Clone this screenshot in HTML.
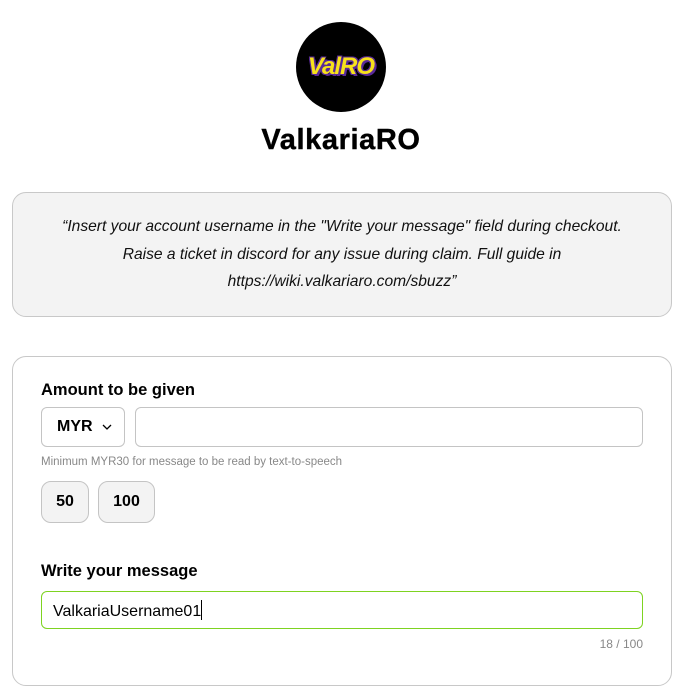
<!DOCTYPE html>
<html><head><meta charset="utf-8"><style>
*{box-sizing:border-box;margin:0;padding:0}
body{width:680px;height:660px;overflow:hidden;background:#fff;font-family:"Liberation Sans",sans-serif;color:#000;position:relative}
.abs{position:absolute}
.logo{left:296px;top:22px;width:90px;height:90px;border-radius:50%;background:#000;display:flex;align-items:center;justify-content:center}
.logo span{font-weight:bold;font-style:italic;font-size:24px;color:#f7e21b;text-shadow:2px 2px 0 #5a2a9a,-1px -1px 0 #5a2a9a,1px -1px 0 #5a2a9a,-1px 1px 0 #5a2a9a;letter-spacing:-1px}
h1{position:absolute;left:0;width:682px;top:124px;text-align:center;font-size:29px;font-weight:bold;letter-spacing:0.6px;-webkit-text-stroke:0.4px #000}
.quote{left:12px;top:192px;width:660px;height:125px;border:1px solid #c8c8c8;border-radius:14px;background:#f3f3f3;text-align:center;font-style:italic;font-size:15.6px;line-height:27.5px;padding-top:20px;color:#111}
.card{left:12px;top:356px;width:660px;height:330px;border:1px solid #c8c8c8;border-radius:14px}
.lbl{font-weight:bold;font-size:16.5px}
.box{border:1px solid #c4c4c4;border-radius:6px;background:#fff}
.btn{border:1px solid #c4c4c4;border-radius:10px;background:#f3f3f3;font-weight:bold;font-size:16px;display:flex;align-items:center;justify-content:center}
</style></head><body>
<div class="abs logo"><span>ValRO</span></div>
<h1>ValkariaRO</h1>
<div class="abs quote">“Insert your account username in the "Write your message" field during checkout.<br>Raise a ticket in discord for any issue during claim. Full guide in<br>https://wiki.valkariaro.com/sbuzz”</div>
<div class="abs card"></div>
<div class="abs lbl" style="left:41px;top:381px">Amount to be given</div>
<div class="abs box" style="left:41px;top:407px;width:84px;height:40px;display:flex;align-items:center;padding-left:15px;font-weight:bold;font-size:16px">MYR<svg width="10" height="6" style="margin-left:9px" viewBox="0 0 10 6"><path d="M1 1l4 4 4-4" fill="none" stroke="#000" stroke-width="1.3"/></svg></div>
<div class="abs box" style="left:135px;top:407px;width:508px;height:40px"></div>
<div class="abs" style="left:41px;top:456px;font-size:11.5px;color:#888">Minimum MYR30 for message to be read by text-to-speech</div>
<div class="abs btn" style="left:41px;top:481px;width:48px;height:42px">50</div>
<div class="abs btn" style="left:98px;top:481px;width:57px;height:42px">100</div>
<div class="abs lbl" style="left:41px;top:562px">Write your message</div>
<div class="abs" style="left:41px;top:591px;width:602px;height:38px;border:1.5px solid #7ed321;border-radius:6px;padding:8px 11px;font-size:16px">ValkariaUsername01<span style="display:inline-block;width:1px;height:20px;background:#000;vertical-align:-4px"></span></div>
<div class="abs" style="left:560px;top:637px;width:83px;text-align:right;font-size:12px;color:#888">18 / 100</div>
</body></html>
